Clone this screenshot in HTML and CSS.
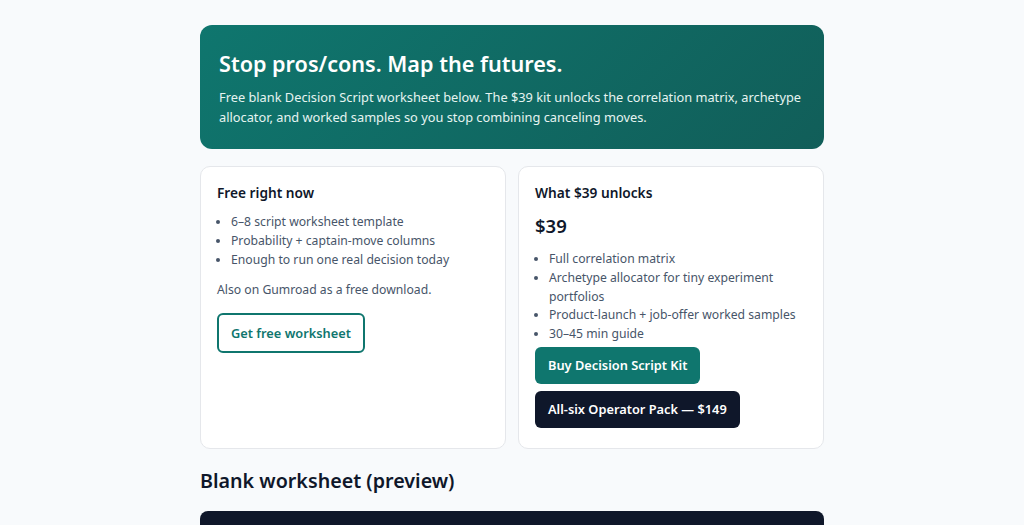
FILE: index.html
```html
<!DOCTYPE html>
<html lang="en">
<head>
<meta charset="utf-8">
<title>Decision Script</title>
<link rel="stylesheet" href="styles.css">
</head>
<body>
<main class="page">
  <section class="hero">
    <h1 class="hero-title">Stop pros/cons. Map the futures.</h1>
    <p class="hero-text">Free blank Decision Script worksheet below. The $39 kit unlocks the correlation matrix, archetype allocator, and worked samples so you stop combining canceling moves.</p>
  </section>
  <section class="cards">
    <div class="card">
      <h2 class="card-title">Free right now</h2>
      <ul class="list">
        <li>6–8 script worksheet template</li>
        <li>Probability + captain-move columns</li>
        <li>Enough to run one real decision today</li>
      </ul>
      <p class="note">Also on Gumroad as a free download.</p>
      <a class="btn btn-outline" href="#">Get free worksheet</a>
    </div>
    <div class="card">
      <h2 class="card-title">What $39 unlocks</h2>
      <div class="price">$39</div>
      <ul class="list list-tight">
        <li>Full correlation matrix</li>
        <li>Archetype allocator for tiny experiment portfolios</li>
        <li>Product-launch + job-offer worked samples</li>
        <li>30–45 min guide</li>
      </ul>
      <div class="actions">
        <a class="btn btn-teal" href="#">Buy Decision Script Kit</a>
        <a class="btn btn-dark" href="#">All-six Operator Pack — $149</a>
      </div>
    </div>
  </section>
  <h2 class="section-title">Blank worksheet (preview)</h2>
  <div class="preview"></div>
</main>
</body>
</html>
```
FILE: styles.css
```css
* { box-sizing: border-box; }
html, body { margin: 0; padding: 0; }
body {
  background: #f8fafc;
  font-family: "Noto Sans", "Open Sans", sans-serif;
  color: #0f172a;
}
.page {
  width: 624px;
  margin: 25px auto 0;
}
.hero {
  background: linear-gradient(135deg, #0f766e 0%, #115e59 100%);
  border-radius: 12px;
  padding: 25px 19px 22px;
  color: #fff;
}
.hero-title {
  margin: 0;
  font-size: 21.6px;
  line-height: 28px;
  font-weight: 600;
}
.hero-text {
  margin: 9px 0 0;
  font-size: 12.8px;
  line-height: 20px;
  color: #e6f4f1;
}
.cards {
  display: grid;
  grid-template-columns: 1fr 1fr;
  gap: 12px;
  margin-top: 17px;
}
.card {
  background: #fff;
  border: 1px solid #e5e7eb;
  border-radius: 10px;
  padding: 16px 16px 20px;
}
.card-title {
  margin: 0;
  font-size: 13.7px;
  line-height: 20px;
  font-weight: 600;
  color: #0f172a;
}
.list {
  margin: 10px 0 0;
  padding-left: 14px;
  font-size: 12.2px;
  line-height: 18.8px;
  color: #475569;
}
.note {
  margin: 11px 0 0;
  font-size: 12.2px;
  line-height: 19px;
  color: #475569;
}
.price {
  margin-top: 9px;
  font-size: 18.5px;
  line-height: 28px;
  font-weight: 600;
  color: #0f172a;
}
.list-tight { margin-top: 10px; }
.btn {
  display: inline-block;
  text-decoration: none;
  font-size: 12.8px;
  font-weight: 600;
  border-radius: 6px;
}
.btn-outline {
  margin-top: 14px;
  border: 2px solid #0f766e;
  color: #0f766e;
  padding: 0 12px;
  height: 40px;
  line-height: 36px;
}
.actions {
  display: flex;
  flex-direction: column;
  align-items: flex-start;
  gap: 7px;
  margin-top: 3px;
}
.btn-teal {
  background: #0f766e;
  color: #fff;
  padding: 0 13px;
  line-height: 37px;
}
.btn-dark {
  background: #0f172a;
  color: #fff;
  padding: 0 13px;
  line-height: 37px;
}
.section-title {
  margin: 18px 0 0;
  font-size: 19.7px;
  line-height: 28px;
  font-weight: 600;
  color: #0f172a;
}
.preview {
  margin-top: 16px;
  height: 200px;
  background: #0f172a;
  border-radius: 8px;
}
```
